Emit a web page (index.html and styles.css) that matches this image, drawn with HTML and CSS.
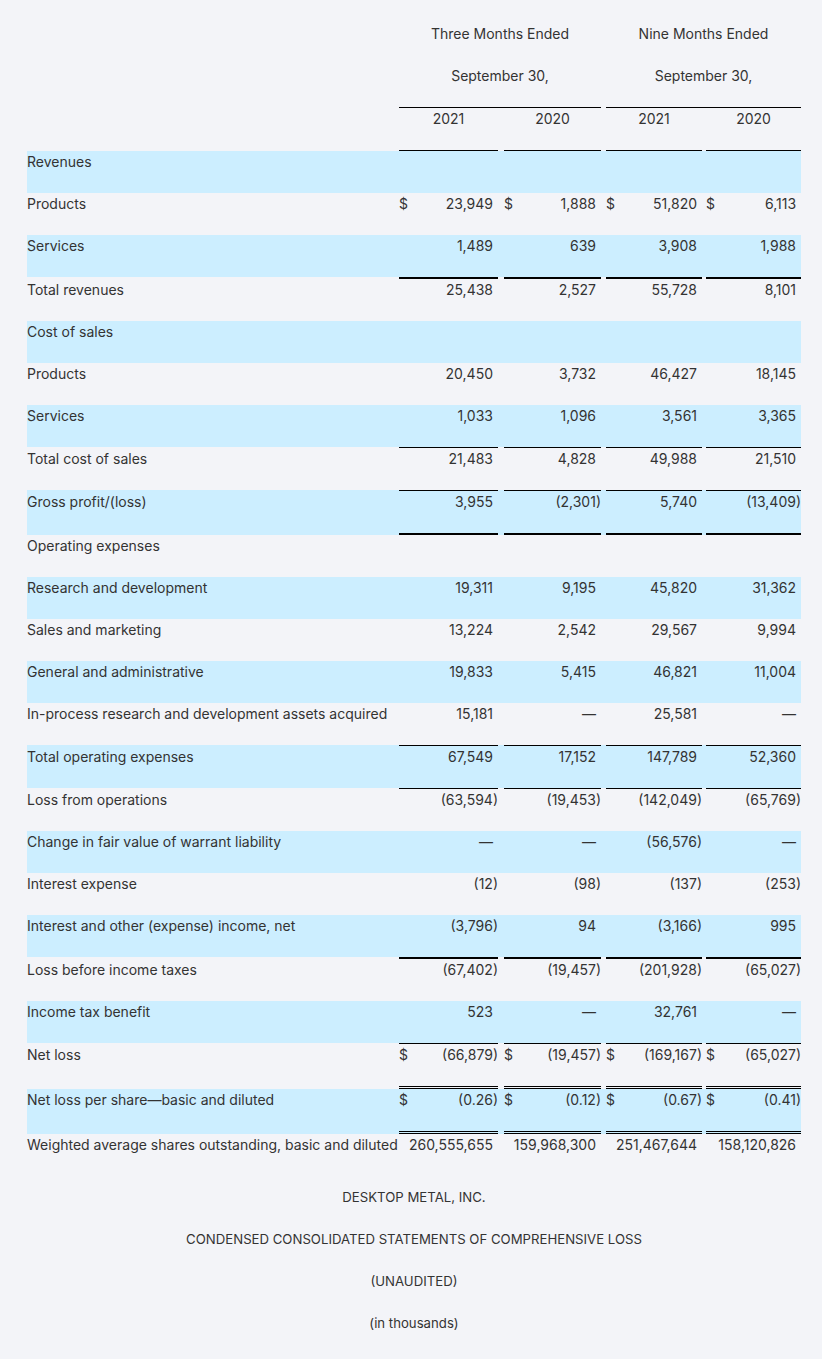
FILE: index.html
```html
<!DOCTYPE html>
<html lang="en">
<head>
    <meta charset="UTF-8">
    <meta name="viewport" content="width=device-width, initial-scale=1.0">
    <title>Desktop Metal - Condensed Consolidated Statements of Operations</title>
    <link rel="stylesheet" href="styles.css">
</head>
<body>
    <div class="statement">
        <table class="fin">
            <colgroup>
                <col class="c-label">
                <col class="c-a1"><col class="c-s1">
                <col class="c-a2"><col class="c-s2">
                <col class="c-a3"><col class="c-s3">
                <col class="c-a4">
            </colgroup>
            <thead>
                <tr>
                    <td></td>
                    <td class="head" colspan="3">Three Months Ended</td>
                    <td></td>
                    <td class="head" colspan="3">Nine Months Ended</td>
                </tr>
                <tr>
                    <td></td>
                    <td class="head line" colspan="3">September 30,</td>
                    <td></td>
                    <td class="head line" colspan="3">September 30,</td>
                </tr>
                <tr>
                    <td></td>
                    <td class="head line">2021</td><td></td>
                    <td class="head line">2020</td><td></td>
                    <td class="head line">2021</td><td></td>
                    <td class="head line">2020</td>
                </tr>
            </thead>
            <tbody>
                <!-- Revenues -->
                <tr class="blue">
                    <td class="label">Revenues</td>
                    <td></td><td></td><td></td><td></td><td></td><td></td><td></td>
                </tr>
                <tr>
                    <td class="label">Products</td>
                    <td class="amt"><span class="cur">$</span>23,949</td><td></td>
                    <td class="amt"><span class="cur">$</span>1,888</td><td></td>
                    <td class="amt"><span class="cur">$</span>51,820</td><td></td>
                    <td class="amt"><span class="cur">$</span>6,113</td>
                </tr>
                <tr class="blue">
                    <td class="label">Services</td>
                    <td class="amt">1,489</td><td></td>
                    <td class="amt">639</td><td></td>
                    <td class="amt">3,908</td><td></td>
                    <td class="amt">1,988</td>
                </tr>
                <tr class="top2">
                    <td class="label">Total revenues</td>
                    <td class="amt">25,438</td><td></td>
                    <td class="amt">2,527</td><td></td>
                    <td class="amt">55,728</td><td></td>
                    <td class="amt">8,101</td>
                </tr>

                <!-- Cost of sales -->
                <tr class="blue">
                    <td class="label">Cost of sales</td>
                    <td></td><td></td><td></td><td></td><td></td><td></td><td></td>
                </tr>
                <tr>
                    <td class="label">Products</td>
                    <td class="amt">20,450</td><td></td>
                    <td class="amt">3,732</td><td></td>
                    <td class="amt">46,427</td><td></td>
                    <td class="amt">18,145</td>
                </tr>
                <tr class="blue">
                    <td class="label">Services</td>
                    <td class="amt">1,033</td><td></td>
                    <td class="amt">1,096</td><td></td>
                    <td class="amt">3,561</td><td></td>
                    <td class="amt">3,365</td>
                </tr>
                <tr class="top1">
                    <td class="label">Total cost of sales</td>
                    <td class="amt">21,483</td><td></td>
                    <td class="amt">4,828</td><td></td>
                    <td class="amt">49,988</td><td></td>
                    <td class="amt">21,510</td>
                </tr>
                <tr class="blue top1 bottom2">
                    <td class="label">Gross profit/(loss)</td>
                    <td class="amt">3,955</td><td></td>
                    <td class="amt neg">(2,301)</td><td></td>
                    <td class="amt">5,740</td><td></td>
                    <td class="amt neg">(13,409)</td>
                </tr>

                <!-- Operating expenses -->
                <tr>
                    <td class="label">Operating expenses</td>
                    <td></td><td></td><td></td><td></td><td></td><td></td><td></td>
                </tr>
                <tr class="blue">
                    <td class="label">Research and development</td>
                    <td class="amt">19,311</td><td></td>
                    <td class="amt">9,195</td><td></td>
                    <td class="amt">45,820</td><td></td>
                    <td class="amt">31,362</td>
                </tr>
                <tr>
                    <td class="label">Sales and marketing</td>
                    <td class="amt">13,224</td><td></td>
                    <td class="amt">2,542</td><td></td>
                    <td class="amt">29,567</td><td></td>
                    <td class="amt">9,994</td>
                </tr>
                <tr class="blue">
                    <td class="label">General and administrative</td>
                    <td class="amt">19,833</td><td></td>
                    <td class="amt">5,415</td><td></td>
                    <td class="amt">46,821</td><td></td>
                    <td class="amt">11,004</td>
                </tr>
                <tr>
                    <td class="label">In-process research and development assets acquired</td>
                    <td class="amt">15,181</td><td></td>
                    <td class="amt">—</td><td></td>
                    <td class="amt">25,581</td><td></td>
                    <td class="amt">—</td>
                </tr>
                <tr class="blue top1">
                    <td class="label">Total operating expenses</td>
                    <td class="amt">67,549</td><td></td>
                    <td class="amt">17,152</td><td></td>
                    <td class="amt">147,789</td><td></td>
                    <td class="amt">52,360</td>
                </tr>
                <tr class="top1">
                    <td class="label">Loss from operations</td>
                    <td class="amt neg">(63,594)</td><td></td>
                    <td class="amt neg">(19,453)</td><td></td>
                    <td class="amt neg">(142,049)</td><td></td>
                    <td class="amt neg">(65,769)</td>
                </tr>
                <tr class="blue">
                    <td class="label">Change in fair value of warrant liability</td>
                    <td class="amt">—</td><td></td>
                    <td class="amt">—</td><td></td>
                    <td class="amt neg">(56,576)</td><td></td>
                    <td class="amt">—</td>
                </tr>
                <tr>
                    <td class="label">Interest expense</td>
                    <td class="amt neg">(12)</td><td></td>
                    <td class="amt neg">(98)</td><td></td>
                    <td class="amt neg">(137)</td><td></td>
                    <td class="amt neg">(253)</td>
                </tr>
                <tr class="blue">
                    <td class="label">Interest and other (expense) income, net</td>
                    <td class="amt neg">(3,796)</td><td></td>
                    <td class="amt">94</td><td></td>
                    <td class="amt neg">(3,166)</td><td></td>
                    <td class="amt">995</td>
                </tr>
                <tr class="top2">
                    <td class="label">Loss before income taxes</td>
                    <td class="amt neg">(67,402)</td><td></td>
                    <td class="amt neg">(19,457)</td><td></td>
                    <td class="amt neg">(201,928)</td><td></td>
                    <td class="amt neg">(65,027)</td>
                </tr>
                <tr class="blue">
                    <td class="label">Income tax benefit</td>
                    <td class="amt">523</td><td></td>
                    <td class="amt">—</td><td></td>
                    <td class="amt">32,761</td><td></td>
                    <td class="amt">—</td>
                </tr>
                <tr class="top1 double">
                    <td class="label">Net loss</td>
                    <td class="amt neg"><span class="cur">$</span>(66,879)</td><td></td>
                    <td class="amt neg"><span class="cur">$</span>(19,457)</td><td></td>
                    <td class="amt neg"><span class="cur">$</span>(169,167)</td><td></td>
                    <td class="amt neg"><span class="cur">$</span>(65,027)</td>
                </tr>
                <tr class="blue double">
                    <td class="label">Net loss per share—basic and diluted</td>
                    <td class="amt neg"><span class="cur">$</span>(0.26)</td><td></td>
                    <td class="amt neg"><span class="cur">$</span>(0.12)</td><td></td>
                    <td class="amt neg"><span class="cur">$</span>(0.67)</td><td></td>
                    <td class="amt neg"><span class="cur">$</span>(0.41)</td>
                </tr>
                <tr>
                    <td class="label">Weighted average shares outstanding, basic and diluted</td>
                    <td class="amt">260,555,655</td><td></td>
                    <td class="amt">159,968,300</td><td></td>
                    <td class="amt">251,467,644</td><td></td>
                    <td class="amt">158,120,826</td>
                </tr>
            </tbody>
        </table>

        <div class="titles">
            <p>DESKTOP METAL, INC.</p>
            <p>CONDENSED CONSOLIDATED STATEMENTS OF COMPREHENSIVE LOSS</p>
            <p>(UNAUDITED)</p>
            <p>(in thousands)</p>
        </div>
    </div>
</body>
</html>
```

FILE: styles.css
```css
body {
    margin: 0;
    padding: 0;
    background-color: #f3f4f8;
    font-family: Inter, "Liberation Sans", Arial, sans-serif;
    font-size: 14px;
    color: #333;
}
.statement {
    width: 774px;
    padding: 23px 0 0 27px;
}
.fin {
    width: 774px;
    table-layout: fixed;
    border-collapse: separate;
    border-spacing: 0;
}
.c-label { width: 372px; }
.c-a1 { width: 99px; }
.c-s1 { width: 6px; }
.c-a2 { width: 97px; }
.c-s2 { width: 5px; }
.c-a3 { width: 96px; }
.c-s3 { width: 4px; }
.c-a4 { width: 95px; }

.fin td {
    height: 41px;
    padding: 1px 0 0;
    vertical-align: top;
    line-height: 20px;
    white-space: nowrap;
}
.fin .head {
    text-align: center;
}
.fin .head.line {
    border-bottom: 1px solid #000;
}
.fin tr.blue td {
    background-color: #cceeff;
}
.fin .amt {
    text-align: right;
    padding-right: 5px;
}
.fin .amt.neg {
    padding-right: 0;
}
.cur {
    float: left;
}

/* rule lines: whole row gets the border so labels shift with the figures */
.fin tr.top1 td {
    border-top: 1px solid transparent;
}
.fin tr.top2 td {
    border-top: 2px solid transparent;
}
.fin tr.bottom2 td {
    border-bottom: 2px solid transparent;
}
.fin tr.double td {
    border-bottom: 3px double transparent;
}
.fin tr.top1 .amt,
.fin tr.top2 .amt,
.fin tr.bottom2 .amt,
.fin tr.double .amt {
    border-color: #000;
}

.titles {
    padding-top: 11px;
    text-align: center;
    font-size: 13.2px;
}
.titles p {
    margin: 0 0 22px;
    line-height: 20px;
}
```
